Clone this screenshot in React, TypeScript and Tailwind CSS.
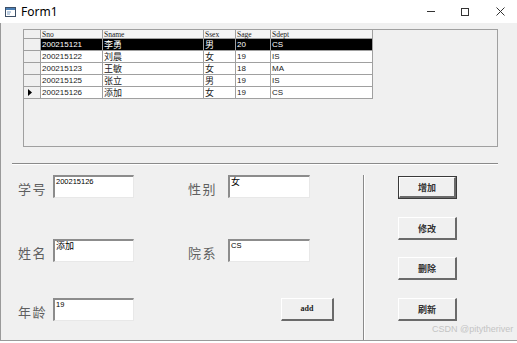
import React from "react";

const rows = [
  ["200215121", "李勇", "男", "20", "CS"],
  ["200215122", "刘晨", "女", "19", "IS"],
  ["200215123", "王敏", "女", "18", "MA"],
  ["200215125", "张立", "男", "19", "IS"],
  ["200215126", "添加", "女", "19", "CS"],
];
const heads = ["Sno", "Sname", "Ssex", "Sage", "Sdept"];
const widths = ["w-[62px]", "w-[101px]", "w-[32px]", "w-[35px]", "w-[102px]"];
const cjk = [false, true, true, false, false];

function TextBox({ value, w, cj }: { value: string; w: string; cj?: boolean }) {
  return (
    <div
      className={`${w} h-[23px] bg-white border-t-2 border-l-2 border-t-[#8c8c8c] border-l-[#8c8c8c] border-r border-b border-r-[#e8e8e8] border-b-[#e8e8e8] pl-[1px] ${
        cj
          ? "text-[9px] leading-[10px] font-['Noto_Sans_CJK_SC',sans-serif]"
          : "text-[7.5px] leading-[9px] font-['Liberation_Sans',sans-serif]"
      } text-black`}
    >
      {value}
    </div>
  );
}

function Btn({ label, def }: { label: string; def?: boolean }) {
  return (
    <div className={`w-[59px] h-[23px] ${def ? "border border-[#3a3a3a]" : ""} bg-[#f0f0f0]`}>
      <div className="w-full h-full border-t border-l border-t-white border-l-white border-r-2 border-b-2 border-r-[#6a6a6a] border-b-[#6a6a6a] flex items-center justify-center">
        <span className="text-[9px] leading-none font-bold font-['Noto_Sans_CJK_SC',sans-serif] text-[#333]">
          {label}
        </span>
      </div>
    </div>
  );
}

function Label({ text }: { text: string }) {
  return (
    <div className="pt-[3px] text-[13px] tracking-[1.5px] text-[#5f5f5f] font-['Noto_Sans_CJK_SC',sans-serif] leading-none">
      {text}
    </div>
  );
}

export default function App() {
  return (
    <div className="relative w-[517px] h-[343px] bg-white overflow-hidden font-['Liberation_Sans',sans-serif]">
      {/* Title bar */}
      <div className="h-[23px] flex items-center bg-white">
        <svg width="11" height="10" viewBox="0 0 11 10" className="ml-[5px]">
          <rect x="0.5" y="0.5" width="10" height="9" fill="#fff" stroke="#3d4f66" />
          <rect x="1" y="1" width="9" height="2" fill="#4a7fb5" />
          <path d="M2 5 L6 5 M2 7 L5 7" stroke="#7a9cc0" strokeWidth="1" />
        </svg>
        <span className="ml-[5px] text-[12px] text-black font-['Noto_Sans',sans-serif] leading-none">Form1</span>
        <div className="ml-auto flex items-center">
          <div className="w-[8px] h-[1px] bg-[#333] mr-[26px]" />
          <div className="w-[8px] h-[8px] border border-[#333] mr-[27px]" />
          <svg width="9" height="9" viewBox="0 0 9 9" className="mr-[12px]">
            <path d="M0.5 0.5 L8.5 8.5 M8.5 0.5 L0.5 8.5" stroke="#333" strokeWidth="1" />
          </svg>
        </div>
      </div>

      {/* Client area */}
      <div className="h-[318px] bg-[#f0f0f0] border-l border-b border-[#9a9a9a] flex flex-col">
        {/* Grid */}
        <div className="mt-[6px] ml-[22px] w-[475px] h-[118px] border border-[#a0a0a0] bg-[#f0f0f0] flex flex-col">
          <div className="flex h-[9px]">
            <div className="w-[17px] h-[9px] border-r border-b border-[#a0a0a0] bg-[#f0f0f0]" />
            {heads.map((h, i) => (
              <div
                key={h}
                className={`${widths[i]} h-[9px] border-r border-b border-[#a0a0a0] bg-[#f4f4f4] pl-[1px] text-[7.5px] leading-[9px] font-['Liberation_Serif',serif] text-[#222]`}
              >
                {h}
              </div>
            ))}
          </div>
          {rows.map((r, ri) => (
            <div key={ri} className="flex h-[12px]">
              <div className="w-[17px] h-[12px] border-r border-b border-[#a0a0a0] bg-[#f0f0f0] flex items-center pl-[4px]">
                {ri === 4 && (
                  <svg width="4" height="7" viewBox="0 0 4 7">
                    <path d="M0 0 L4 3.5 L0 7 Z" fill="#000" />
                  </svg>
                )}
              </div>
              {r.map((c, ci) => (
                <div
                  key={ci}
                  className={`${widths[ci]} h-[12px] border-r border-b border-[#a0a0a0] pl-[1px] leading-[11px] ${
                    ri === 0 ? "bg-black text-white" : "bg-white text-[#222]"
                  } ${
                    cjk[ci]
                      ? "text-[9px] font-['Noto_Sans_CJK_SC',sans-serif]"
                      : "text-[8px] font-['Liberation_Sans',sans-serif]"
                  }`}
                >
                  {c}
                </div>
              ))}
            </div>
          ))}
        </div>

        {/* Horizontal separator */}
        <div className="mt-[16px] ml-[11px] w-[486px] h-[2px] border-t border-t-[#8a8a8a] border-b border-b-white" />

        {/* Bottom section */}
        <div className="flex flex-1">
          <div className="w-[362px] pl-[17px] pt-[10px] flex flex-col">
            <div className="flex items-center h-[23px]">
              <div className="w-[35px]"><Label text="学号" /></div>
              <TextBox value="200215126" w="w-[81px]" />
              <div className="ml-[54px] w-[40px]"><Label text="性别" /></div>
              <TextBox value="女" w="w-[82px]" cj />
            </div>
            <div className="flex items-center h-[23px] mt-[41px]">
              <div className="w-[35px]"><Label text="姓名" /></div>
              <TextBox value="添加" w="w-[81px]" cj />
              <div className="ml-[54px] w-[40px]"><Label text="院系" /></div>
              <TextBox value="CS" w="w-[82px]" />
            </div>
            <div className="flex items-center h-[23px] mt-[36px]">
              <div className="w-[35px]"><Label text="年龄" /></div>
              <TextBox value="19" w="w-[81px]" />
              <div className="ml-[147px] w-[53px]">
                <div className="w-[53px] h-[23px] bg-[#f0f0f0] border-t border-l border-t-white border-l-white border-r-2 border-b-2 border-r-[#6a6a6a] border-b-[#6a6a6a] flex items-center justify-center">
                  <span className="text-[8px] leading-none font-bold font-['Liberation_Serif',serif] text-[#222]">add</span>
                </div>
              </div>
            </div>
          </div>
          <div className="mt-[10px] w-[2px] border-l border-l-[#8a8a8a] border-r border-r-white" />
          <div className="ml-[33px] pt-[11px] flex flex-col">
            <Btn label="增加" def />
            <div className="mt-[18px]"><Btn label="修改" /></div>
            <div className="mt-[17px]"><Btn label="删除" /></div>
            <div className="mt-[18px]"><Btn label="刷新" /></div>
          </div>
        </div>
      </div>

      {/* Watermark */}
      <div className="absolute left-[432px] top-[325px] whitespace-nowrap text-[9px] text-[#c4c4c4] font-['Liberation_Sans',sans-serif] leading-none">
        CSDN @pitytheriver
      </div>
    </div>
  );
}
